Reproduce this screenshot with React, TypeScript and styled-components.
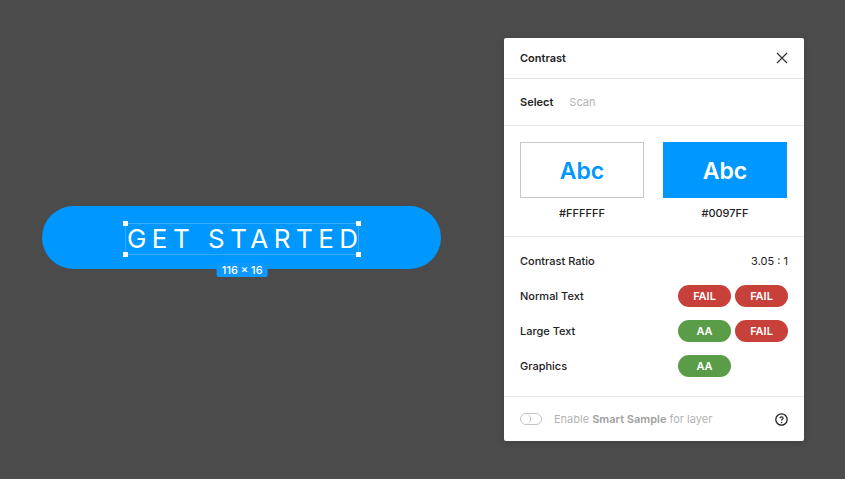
import styled, { createGlobalStyle } from "styled-components";

const GlobalStyle = createGlobalStyle`
  html, body {
    margin: 0;
    padding: 0;
    background: #4b4b4b;
    font-family: Inter, "Noto Sans", sans-serif;
  }
`;

const Page = styled.div`
  width: 845px;
  height: 479px;
  display: flex;
  padding-top: 38px;
  box-sizing: border-box;
`;

const Canvas = styled.div`
  width: 504px;
  padding: 168px 0 0 42px;
  box-sizing: border-box;
`;

const CtaButton = styled.div`
  width: 399px;
  height: 63px;
  border-radius: 32px;
  background: #0097ff;
  display: flex;
  align-items: center;
  justify-content: center;
`;

const Selected = styled.span`
  position: relative;
  color: #fff;
  font-size: 26px;
  font-weight: 400;
  letter-spacing: 5.5px;
  line-height: 32px;
  margin: 2px 0 0 7.5px;
`;

const SelectBox = styled.span`
  position: absolute;
  left: -2px;
  right: 5px;
  top: 0px;
  bottom: 0px;
  border: 1px solid rgba(255, 255, 255, 0.22);
`;

const Handle = styled.span<{ $x: "l" | "r"; $y: "t" | "b" }>`
  position: absolute;
  width: 5px;
  height: 5px;
  background: #fff;
  ${(p) => (p.$x === "l" ? "left: -4px;" : "right: 3px;")}
  ${(p) => (p.$y === "t" ? "top: -2px;" : "bottom: -2px;")}
`;

const SizeTag = styled.span`
  position: absolute;
  left: calc(50% - 3px);
  bottom: -22px;
  transform: translateX(-50%);
  background: #0d99ff;
  color: #fff;
  font-size: 11px;
  font-weight: 500;
  letter-spacing: 0;
  line-height: 14px;
  padding: 0 5px;
  border-radius: 2px;
  white-space: nowrap;
`;

const Panel = styled.div`
  width: 300px;
  height: 403px;
  background: #fff;
  border-radius: 2px;
  box-shadow: 0 2px 6px rgba(0, 0, 0, 0.15);
  display: flex;
  flex-direction: column;
  color: #222;
  font-size: 11px;
`;

const Section = styled.div<{ $last?: boolean }>`
  border-bottom: ${(p) => (p.$last ? "none" : "1px solid #e6e6e6")};
  padding: 0 16px;
`;

const Header = styled(Section)`
  height: 40px;
  display: flex;
  align-items: center;
  justify-content: space-between;
  font-weight: 600;
`;

const Tabs = styled(Section)`
  height: 46px;
  display: flex;
  align-items: center;
  gap: 16px;
`;

const Tab = styled.span<{ $active?: boolean }>`
  font-weight: ${(p) => (p.$active ? 600 : 400)};
  color: ${(p) => (p.$active ? "#222" : "#b3b3b3")};
`;

const Swatches = styled(Section)`
  height: 111px;
  padding-top: 16px;
  box-sizing: border-box;
  display: grid;
  grid-template-columns: 124px 124px;
  column-gap: 19px;
  align-content: start;
`;

const SwatchCol = styled.div`
  display: flex;
  flex-direction: column;
  align-items: center;
  gap: 8px;
`;

const Swatch = styled.div<{ $bg: string; $fg: string }>`
  width: 124px;
  height: 56px;
  box-sizing: border-box;
  padding-top: 2px;
  background: ${(p) => p.$bg};
  color: ${(p) => p.$fg};
  border: 1px solid ${(p) => (p.$bg === "#ffffff" ? "#c8c8c8" : p.$bg)};
  display: flex;
  align-items: center;
  justify-content: center;
  font-size: 23px;
  font-weight: 600;
`;

const Hex = styled.span`
  font-weight: 500;
  color: #222;
  line-height: 14px;
`;

const Results = styled(Section)`
  padding-top: 6px;
  padding-bottom: 13px;
`;

const Row = styled.div`
  height: 35px;
  display: flex;
  align-items: center;
  justify-content: space-between;
  font-weight: 500;
`;

const Ratio = styled.span`
  font-weight: 400;
`;

const Badges = styled.div`
  display: flex;
  gap: 4px;
  width: 110px;
`;

const Badge = styled.span<{ $pass: boolean }>`
  width: 53px;
  height: 22px;
  border-radius: 11px;
  background: ${(p) => (p.$pass ? "#5a9c47" : "#c8403a")};
  color: #fff;
  font-weight: 600;
  display: flex;
  align-items: center;
  justify-content: center;
`;

const Footer = styled(Section)`
  flex: 1;
  display: flex;
  align-items: center;
  gap: 12px;
  color: #b3b3b3;
`;

const Toggle = styled.span`
  width: 20px;
  height: 10px;
  border: 1px solid #c4c4c4;
  border-radius: 6px;
  position: relative;
  &::before {
    content: "";
    position: absolute;
    left: 0;
    top: 0;
    width: 10px;
    height: 10px;
    border-radius: 50%;
    box-sizing: border-box;
    border-right: 1px solid #c4c4c4;
  }
`;

const Strong = styled.b`
  font-weight: 600;
  color: #a0a0a0;
`;

const FooterText = styled.span`
  flex: 1;
`;

const rows: { label: string; badges: boolean[] }[] = [
  { label: "Normal Text", badges: [false, false] },
  { label: "Large Text", badges: [true, false] },
  { label: "Graphics", badges: [true] },
];

export default function App() {
  return (
    <>
      <GlobalStyle />
      <Page>
        <Canvas>
          <CtaButton>
            <Selected>
              GET STARTED
              <SelectBox />
              <Handle $x="l" $y="t" />
              <Handle $x="r" $y="t" />
              <Handle $x="l" $y="b" />
              <Handle $x="r" $y="b" />
              <SizeTag>116 × 16</SizeTag>
            </Selected>
          </CtaButton>
        </Canvas>

        <Panel>
          <Header>
            <span>Contrast</span>
            <svg width="12" height="12" viewBox="0 0 12 12">
              <path d="M1 1 L11 11 M11 1 L1 11" stroke="#333" strokeWidth="1.2" />
            </svg>
          </Header>
          <Tabs>
            <Tab $active>Select</Tab>
            <Tab>Scan</Tab>
          </Tabs>
          <Swatches>
            <SwatchCol>
              <Swatch $bg="#ffffff" $fg="#0097ff">Abc</Swatch>
              <Hex>#FFFFFF</Hex>
            </SwatchCol>
            <SwatchCol>
              <Swatch $bg="#0097ff" $fg="#ffffff">Abc</Swatch>
              <Hex>#0097FF</Hex>
            </SwatchCol>
          </Swatches>
          <Results>
            <Row>
              <span>Contrast Ratio</span>
              <Ratio>3.05 : 1</Ratio>
            </Row>
            {rows.map((r) => (
              <Row key={r.label}>
                <span>{r.label}</span>
                <Badges>
                  {r.badges.map((b, i) => (
                    <Badge key={i} $pass={b}>{b ? "AA" : "FAIL"}</Badge>
                  ))}
                </Badges>
              </Row>
            ))}
          </Results>
          <Footer $last>
            <Toggle />
            <FooterText>
              Enable <Strong>Smart Sample</Strong> for layer
            </FooterText>
            <svg width="13" height="13" viewBox="0 0 13 13">
              <circle cx="6.5" cy="6.5" r="5.7" fill="none" stroke="#222" strokeWidth="1.3" />
              <path d="M4.9 5.2 C4.9 3.4 8.1 3.4 8.1 5.2 C8.1 6.3 6.5 6.3 6.5 7.6" fill="none" stroke="#222" strokeWidth="1.2" />
              <circle cx="6.5" cy="9.4" r="0.75" fill="#222" />
            </svg>
          </Footer>
        </Panel>
      </Page>
    </>
  );
}
